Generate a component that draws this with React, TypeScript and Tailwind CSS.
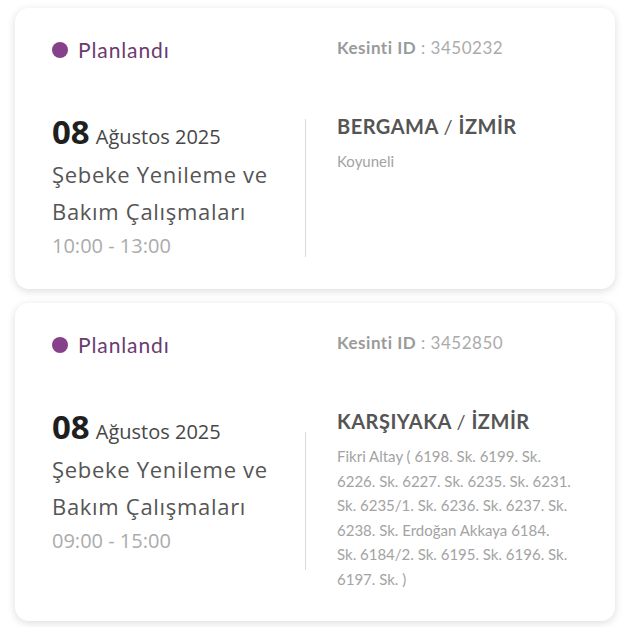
const outages = [
  {
    id: "3450232",
    day: "08",
    monthYear: "Ağustos 2025",
    time: "10:00 - 13:00",
    place: "BERGAMA",
    city: "İZMİR",
    detail: "Koyuneli",
  },
  {
    id: "3452850",
    day: "08",
    monthYear: "Ağustos 2025",
    time: "09:00 - 15:00",
    place: "KARŞIYAKA",
    city: "İZMİR",
    detail:
      "Fikri Altay ( 6198. Sk. 6199. Sk. 6226. Sk. 6227. Sk. 6235. Sk. 6231. Sk. 6235/1. Sk. 6236. Sk. 6237. Sk. 6238. Sk. Erdoğan Akkaya 6184. Sk. 6184/2. Sk. 6195. Sk. 6196. Sk. 6197. Sk. )",
  },
];

type Outage = (typeof outages)[number];

const geo = { fontFamily: "Lato, 'Noto Sans', sans-serif" };
const human = { fontFamily: "'Open Sans', 'Noto Sans', sans-serif" };

const OutageCard = ({ item }: { item: Outage }) => {
  return (
    <div className="rounded-[14px] bg-white pl-[37px] pr-[43px] pt-[28px] pb-[29px] shadow-[0_2px_8px_rgba(0,0,0,0.14)]">
      {/* status + id */}
      <div className="flex items-center">
        <div className="flex w-[285px] items-center gap-[10px]" style={geo}>
          <span className="h-[16px] w-[16px] rounded-full bg-[#87418b]" />
          <span className="text-[21px] leading-[28px] tracking-[0.9px] text-[#6b3a6f]">Planlandı</span>
        </div>
        <div className="-mt-[4px] text-[17px] leading-[24px] tracking-[0.5px]" style={geo}>
          <span className="font-bold text-[#9a9a9a]">Kesinti ID</span>
          <span className="text-[#ababab]"> : {item.id}</span>
        </div>
      </div>

      <div className="mt-[48px] flex">
        <div className="w-[253px] self-start" style={human}>
          <div className="flex h-[40px] items-baseline gap-[6px] leading-[40px]">
            <span className="text-[33px] font-bold text-[#1f1f1f]">{item.day}</span>
            <span className="text-[20px] text-[#474747]">{item.monthYear}</span>
          </div>
          <div className="mt-[4px] text-[22px] leading-[37px] tracking-[0.7px] text-[#555]">
            Şebeke Yenileme ve
            <br />
            Bakım Çalışmaları
          </div>
          <div className="mt-[2px] text-[20px] leading-[28px] text-[#ababab]">{item.time}</div>
        </div>
        <div className="mt-[4px] h-[138px] w-px self-center bg-[#d9d9d9]" />
        <div className="flex-1 pl-[31px]" style={geo}>
          <div className="whitespace-nowrap text-[20px] leading-[28px] tracking-[0.5px] font-bold text-[#555]">
            {item.place} <span className="font-normal">/</span> {item.city}
          </div>
          <div className="mt-[9px] text-[15px] leading-[24.6px] text-[#a3a3a3]">{item.detail}</div>
        </div>
      </div>
    </div>
  );
};

export default function App() {
  return (
    <div className="min-h-screen bg-white pt-[8px] pl-[15px] pr-[11px]">
      <div className="flex flex-col gap-[14px]">
        {outages.map((o) => (
          <OutageCard key={o.id} item={o} />
        ))}
      </div>
    </div>
  );
}
